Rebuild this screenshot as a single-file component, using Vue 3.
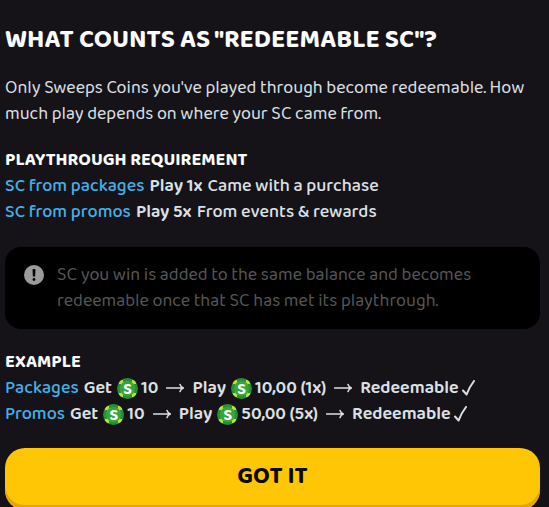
<template>
  <main class="dialog">
    <h1 class="title">What counts as "redeemable SC"?</h1>

    <p class="intro">
      Only Sweeps Coins you've played through become redeemable. How much play depends on where your SC came from.
    </p>

    <section class="section">
      <h2 class="subtitle">Playthrough requirement</h2>
      <p v-for="rule in rules" :key="rule.source" class="row">
        <span class="source">{{ rule.source }}</span>
        <strong class="play">{{ rule.play }}</strong>
        <span>{{ rule.note }}</span>
      </p>
    </section>

    <aside class="notice">
      <svg class="notice-icon" viewBox="0 0 20 20" aria-hidden="true">
        <circle cx="10" cy="10" r="10" fill="#9b9b9b" />
        <path d="M8.5 4.2q1.5-.6 3 0l-.4 7.4H8.9z" fill="#000" />
        <circle cx="10" cy="14.5" r="1.4" fill="#000" />
      </svg>
      <p class="notice-text">
        SC you win is added to the same balance and becomes redeemable once that SC has met its playthrough.
      </p>
    </aside>

    <section class="section">
      <h2 class="subtitle">Example</h2>
      <p v-for="example in examples" :key="example.source" class="row example">
        <span class="source">{{ example.source }}</span>
        <template v-for="step in example.steps" :key="step.label">
          <span>{{ step.label }}</span>
          <span class="money">
            <span class="coin">S</span>
            <span>{{ step.amount }}</span>
          </span>
          <svg class="arrow" viewBox="0 0 18 10" aria-hidden="true">
            <path d="M.5 5h17M14 1.5Q15 4.5 17.5 5Q15 5.5 14 8.5" />
          </svg>
        </template>
        <span class="result">
          <span>Redeemable</span>
          <svg class="check" viewBox="0 0 13 16" aria-hidden="true">
            <path d="M1 10.5L4.6 14.5Q7 7.5 12 1" />
          </svg>
        </span>
      </p>
    </section>

    <button type="button" class="confirm">Got it</button>
  </main>
</template>

<script setup>
const rules = [
  { source: 'SC from packages', play: 'Play 1x', note: 'Came with a purchase' },
  { source: 'SC from promos', play: 'Play 5x', note: 'From events & rewards' }
]

const examples = [
  {
    source: 'Packages',
    steps: [
      { label: 'Get', amount: '10' },
      { label: 'Play', amount: '10,00 (1x)' }
    ]
  },
  {
    source: 'Promos',
    steps: [
      { label: 'Get', amount: '10' },
      { label: 'Play', amount: '50,00 (5x)' }
    ]
  }
]
</script>

<style>
body {
  margin: 0;
  background: #151317;
  overflow-x: hidden;
}
</style>

<style scoped>
.dialog {
  display: flex;
  flex-direction: column;
  padding: 25px 9px 0 5px;
  background: #151317;
  color: #dce0e5;
  font-family: 'Baloo 2', Lato, 'Noto Sans', sans-serif;
  font-size: 18px;
  font-weight: 500;
  line-height: 26px;
}

.title,
.subtitle,
.intro,
.row,
.notice-text {
  margin: 0;
}

.title {
  margin-bottom: 20px;
  color: #fbfdff;
  font-size: 26px;
  font-weight: 700;
  line-height: 30px;
  text-transform: uppercase;
}

.intro {
  margin-bottom: 20px;
  font-weight: 400;
}

.subtitle {
  color: #fbfdff;
  font-size: 18px;
  font-weight: 700;
  line-height: 26px;
  text-transform: uppercase;
}

.row {
  display: flex;
  align-items: center;
  gap: 5px;
  white-space: nowrap;
}

.source {
  color: #44aee6;
  font-weight: 500;
}

.play {
  font-weight: 600;
}

.notice {
  display: flex;
  gap: 13px;
  margin: 22px 0 20px;
  padding: 15px 19px;
  border-radius: 16px;
  background: #000;
  color: #555;
  font-weight: 400;
}

.notice-icon {
  flex: none;
  width: 20px;
  height: 20px;
  margin-top: 3px;
}

.example {
  font-weight: 600;
}

.money,
.result {
  display: flex;
  align-items: center;
  gap: 3px;
}

/* green chip: rim with four light notches, plain disc on top */
.coin {
  flex: none;
  width: 21px;
  height: 21px;
  border-radius: 50%;
  background:
    radial-gradient(circle, #38a53b 7px, transparent 8px),
    repeating-conic-gradient(from 30deg, #b5e53b 0deg 30deg, #259035 30deg 90deg);
  color: #fff;
  font-size: 16px;
  font-weight: 700;
  line-height: 23px;
  text-align: center;
}

.arrow {
  flex: none;
  width: 18px;
  height: 10px;
  margin: 0 3px;
}

.check {
  flex: none;
  width: 13px;
  height: 16px;
}

.arrow path,
.check path {
  fill: none;
  stroke: #dce0e5;
  stroke-width: 1.5;
  stroke-linecap: round;
  stroke-linejoin: round;
}

.check path {
  stroke-width: 2;
}

.confirm {
  margin-top: 21px;
  padding: 15px 16px 19px;
  border: 0;
  border-radius: 20px;
  background: #ffc605;
  box-shadow: inset 0 -5px #e5a50a;
  color: #0b0900;
  font-family: inherit;
  font-size: 24px;
  font-weight: 700;
  line-height: 28px;
  text-transform: uppercase;
  cursor: pointer;
}
</style>
